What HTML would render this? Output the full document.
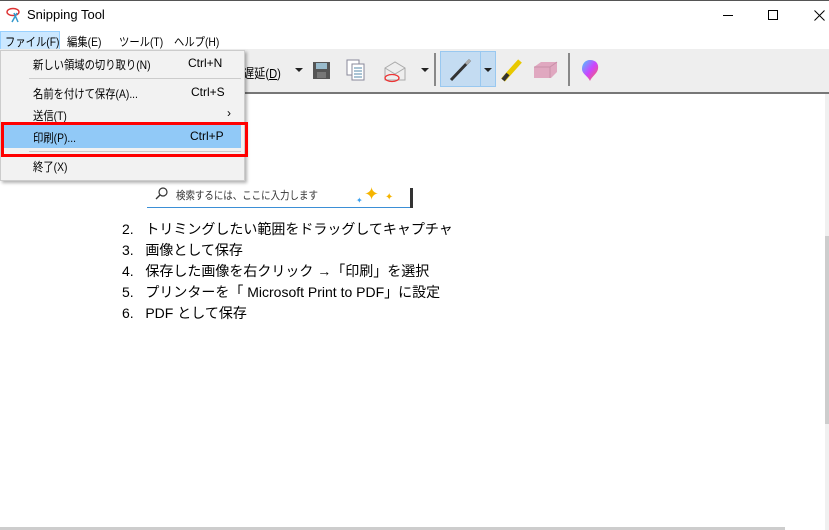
<!DOCTYPE html>
<html><head><meta charset="utf-8"><style>
*{margin:0;padding:0;box-sizing:border-box}
body{width:829px;height:530px;overflow:hidden;background:#fff;position:relative;font-family:"Liberation Sans","Noto Sans CJK JP",sans-serif;font-size:12px;color:#000}
.a{position:absolute;white-space:nowrap}
.s{transform:scaleX(.86);transform-origin:0 0}
</style></head><body>
<div class="a" style="left:0;top:0;width:829px;height:1px;background:#555"></div>
<!-- title -->
<svg class="a" style="left:5px;top:7px" width="18" height="16" viewBox="0 0 18 16"><ellipse cx="8" cy="5" rx="6" ry="3.5" fill="none" stroke="#d33" stroke-width="1.4"/><path d="M9 6 L13 15 M12 6 L7 15" stroke="#39c" stroke-width="1.5"/></svg>
<div class="a" style="left:27px;top:7px;font-size:13px">Snipping Tool</div>
<div class="a" style="left:723px;top:15px;width:10px;height:1px;background:#000"></div>
<div class="a" style="left:768px;top:10px;width:10px;height:10px;border:1px solid #000"></div>
<svg class="a" style="left:814px;top:10px" width="11" height="11"><path d="M0.5 .5L10.5 10.5M10.5 .5L.5 10.5" stroke="#000"/></svg>
<!-- menubar -->
<div class="a" style="left:0;top:31px;width:60px;height:19px;background:#cce8ff;border:1px solid #99d1ff"></div>
<div class="a s" style="left:5px;top:33px">ファイル(F)</div>
<div class="a s" style="left:67px;top:33px">編集(E)</div>
<div class="a s" style="left:119px;top:33px">ツール(T)</div>
<div class="a s" style="left:174px;top:33px">ヘルプ(H)</div>
<!-- toolbar -->
<div class="a" style="left:0;top:49px;width:829px;height:43px;background:#eeeeee"></div>
<div class="a" style="left:0;top:92px;width:829px;height:2px;background:#777"></div>
<div class="a s" style="left:243px;top:63px;font-size:13px">遅延(<u>D</u>)</div>
<div class="a" style="left:295px;top:68px;border-left:4px solid transparent;border-right:4px solid transparent;border-top:4px solid #222"></div>
<svg class="a" style="left:312px;top:61px" width="19" height="19"><rect x="1" y="1" width="17" height="17" fill="#555"/><rect x="4" y="2" width="11" height="6" fill="#9bc"/><rect x="5" y="11" width="9" height="6" fill="#777"/></svg>
<svg class="a" style="left:346px;top:59px" width="20" height="22"><rect x="1" y="1" width="12" height="15" fill="#fff" stroke="#889"/><rect x="6" y="5" width="12" height="16" fill="#fff" stroke="#889"/><path d="M8 9h8M8 12h8M8 15h8M8 18h8" stroke="#58a"/></svg>
<svg class="a" style="left:382px;top:60px" width="28" height="24"><path d="M3 8L13 2L23 8V20H3Z" fill="#eee" stroke="#aaa"/><path d="M3 8L13 14L23 8" fill="none" stroke="#aaa"/><ellipse cx="10" cy="18" rx="7" ry="3.5" fill="none" stroke="#e33" stroke-width="1.3"/></svg>
<div class="a" style="left:421px;top:68px;border-left:4px solid transparent;border-right:4px solid transparent;border-top:4px solid #222"></div>
<div class="a" style="left:434px;top:53px;width:2px;height:33px;background:#888"></div>
<div class="a" style="left:440px;top:51px;width:56px;height:36px;background:#c4dcf2;border:1px solid #99c8f0"></div>
<div class="a" style="left:480px;top:51px;width:1px;height:36px;background:#99c8f0"></div>
<svg class="a" style="left:448px;top:57px" width="26" height="26"><path d="M3 23L22 3" stroke="#333" stroke-width="3"/><path d="M18 7L22 3" stroke="#aaa" stroke-width="3"/></svg>
<div class="a" style="left:484px;top:68px;border-left:4px solid transparent;border-right:4px solid transparent;border-top:4px solid #222"></div>
<svg class="a" style="left:500px;top:57px" width="24" height="25"><path d="M3 23L20 4" stroke="#e8c800" stroke-width="5"/><path d="M3 23L8 17" stroke="#333" stroke-width="4"/></svg>
<svg class="a" style="left:533px;top:61px" width="25" height="18"><path d="M1 6L8 1H24V11L18 17H1Z" fill="#e0a8c0"/><path d="M1 6H17V17M17 6L24 1" fill="none" stroke="#c890a8"/></svg>
<div class="a" style="left:568px;top:53px;width:2px;height:33px;background:#888"></div>
<svg class="a" style="left:580px;top:59px" width="20" height="24"><defs><linearGradient id="g" x1="0" y1="0" x2="1" y2="1"><stop offset="0" stop-color="#4cf"/><stop offset=".5" stop-color="#c4f"/><stop offset="1" stop-color="#f64"/></linearGradient></defs><path d="M10 1C16 1 19 5 18 10C17 15 12 17 10 22C8 17 2 15 2 10C2 5 5 1 10 1Z" fill="url(#g)"/></svg>
<!-- content -->
<svg class="a" style="left:155px;top:186px" width="14" height="14"><circle cx="8" cy="6" r="4" fill="none" stroke="#333" stroke-width="1.2"/><path d="M5 9L1 13" stroke="#333" stroke-width="1.3"/></svg>
<div class="a s" style="left:176px;top:187px;font-size:11px;color:#333">検索するには、ここに入力します</div>
<div class="a" style="left:147px;top:207px;width:265px;height:1px;background:#3b8fd6"></div>
<div class="a" style="left:410px;top:188px;width:3px;height:20px;background:#333"></div>
<div class="a" style="left:364px;top:184px;color:#f5b400;font-size:18px">✦</div>
<div class="a" style="left:385px;top:192px;color:#f5b400;font-size:10px">✦</div>
<div class="a" style="left:356px;top:196px;color:#3aa0f0;font-size:8px">✦</div>
<div style="position:absolute;left:122px;top:219px;font-size:14px;line-height:21px">
<div>2.&nbsp;&nbsp;&nbsp;トリミングしたい範囲をドラッグしてキャプチャ</div>
<div>3.&nbsp;&nbsp;&nbsp;画像として保存</div>
<div>4.&nbsp;&nbsp;&nbsp;保存した画像を右クリック →「印刷」を選択</div>
<div>5.&nbsp;&nbsp;&nbsp;プリンターを「 Microsoft Print to PDF」に設定</div>
<div>6.&nbsp;&nbsp;&nbsp;PDF として保存</div>
</div>
<!-- scrollbars -->
<div class="a" style="left:825px;top:94px;width:4px;height:436px;background:#f0f0f0"></div>
<div class="a" style="left:825px;top:236px;width:4px;height:188px;background:#cdcdcd"></div>
<div class="a" style="left:0;top:527px;width:785px;height:3px;background:#cdcdcd"></div>
<!-- dropdown -->
<div class="a" style="left:0;top:50px;width:245px;height:131px;background:#f2f2f2;border:1px solid #ccc;box-shadow:2px 2px 3px rgba(0,0,0,.3)"></div>
<div class="a" style="left:3px;top:125px;width:238px;height:23px;background:#91c9f7"></div>
<div class="a" style="left:29px;top:78px;width:212px;height:1px;background:#ccc"></div>
<div class="a" style="left:29px;top:151px;width:212px;height:1px;background:#ccc"></div>
<div class="a s" style="left:33px;top:56px">新しい領域の切り取り(N)</div><div class="a" style="left:188px;top:56px">Ctrl+N</div>
<div class="a s" style="left:33px;top:85px">名前を付けて保存(A)...</div><div class="a" style="left:191px;top:85px">Ctrl+S</div>
<div class="a s" style="left:33px;top:107px">送信(T)</div><div class="a" style="left:227px;top:106px">›</div>
<div class="a s" style="left:33px;top:129px">印刷(P)...</div><div class="a" style="left:190px;top:129px">Ctrl+P</div>
<div class="a s" style="left:33px;top:158px">終了(X)</div>
<div class="a" style="left:1px;top:122px;width:247px;height:35px;border:3px solid #f00"></div>
</body></html>
